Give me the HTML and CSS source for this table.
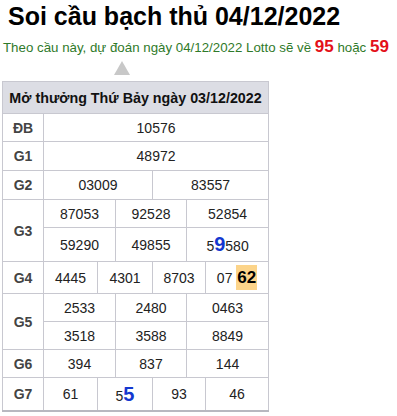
FILE: index.html
```html
<!DOCTYPE html>
<html>
<head>
<meta charset="utf-8">
<link rel="stylesheet" href="styles.css">
</head>
<body>
<h1 class="title">Soi cầu bạch thủ 04/12/2022</h1>
<p class="predict">Theo cầu này, dự đoán ngày 04/12/2022 Lotto sẽ về <b class="hot">95</b> hoặc <b class="hot">59</b></p>
<div class="arrow-wrap"><span class="arrow"></span></div>
<table class="kq">
  <colgroup>
    <col class="c0"><col class="c1"><col class="c2"><col class="c3"><col class="c4"><col class="c5"><col class="c6">
  </colgroup>
  <thead>
    <tr><th colspan="7" class="head">Mở thưởng Thứ Bảy ngày 03/12/2022</th></tr>
  </thead>
  <tbody>
    <tr class="r"><td class="lb">ĐB</td><td colspan="6">10576</td></tr>
    <tr class="r r1"><td class="lb">G1</td><td colspan="6">48972</td></tr>
    <tr class="r r1"><td class="lb">G2</td><td colspan="3">03009</td><td colspan="3">83557</td></tr>
    <tr class="r"><td class="lb" rowspan="2">G3</td><td colspan="2">87053</td><td colspan="2">92528</td><td colspan="2">52854</td></tr>
    <tr class="r3b"><td colspan="2">59290</td><td colspan="2">49855</td><td colspan="2">5<b class="blue">9</b>580</td></tr>
    <tr class="r4"><td class="lb">G4</td><td>4445</td><td colspan="2">4301</td><td colspan="2">8703</td><td>07 <b class="mark">62</b></td></tr>
    <tr class="r"><td class="lb" rowspan="2">G5</td><td colspan="2">2533</td><td colspan="2">2480</td><td colspan="2">0463</td></tr>
    <tr class="r"><td colspan="2">3518</td><td colspan="2">3588</td><td colspan="2">8849</td></tr>
    <tr class="r"><td class="lb">G6</td><td colspan="2">394</td><td colspan="2">837</td><td colspan="2">144</td></tr>
    <tr class="r7"><td class="lb">G7</td><td>61</td><td colspan="2">5<b class="blue">5</b></td><td colspan="2">93</td><td>46</td></tr>
  </tbody>
</table>
</body>
</html>
```

FILE: styles.css
```css
html, body {
  margin: 0;
  padding: 0;
  background: #fff;
}
body {
  font-family: "Liberation Sans", Arial, sans-serif;
  color: #222;
}
.title {
  margin: 0;
  padding: 2px 0 0 8px;
  font-size: 25px;
  line-height: 28px;
  font-weight: bold;
  color: #000;
}
.predict {
  margin: 0;
  padding: 8px 0 0 3px;
  font-size: 13.3px;
  line-height: 18px;
  color: #2f7a2a;
}
.hot {
  color: #e3101a;
  font-size: 17px;
}
.arrow-wrap {
  height: 24px;
  padding-left: 114px;
  padding-top: 4px;
  box-sizing: border-box;
}
.arrow {
  display: block;
  width: 0;
  height: 0;
  border-left: 8px solid transparent;
  border-right: 8px solid transparent;
  border-bottom: 14px solid #c8c8c8;
}
.kq {
  margin-left: 2px;
  width: 267px;
  table-layout: fixed;
  border-collapse: collapse;
  border: 1px solid #c4c4cc;
  border-bottom: 2px solid #b8b8c0;
  font-size: 14px;
}
.c0 { width: 41px; }
.c1 { width: 54px; }
.c2 { width: 18px; }
.c3 { width: 37px; }
.c4 { width: 34px; }
.c5 { width: 19px; }
.c6 { width: 63px; }
.kq th, .kq td {
  border: 1px solid #c8c8d0;
  padding: 0;
  text-align: center;
  white-space: nowrap;
}
.head {
  background: #dcdde4;
  height: 31px;
  font-weight: bold;
  color: #111;
  font-size: 14.3px;
}
.r td { height: 27px; }
.r1 td { height: 28px; }
.r3b td { height: 33px; }
.r4 td { height: 31px; }
.r7 td { height: 32px; }
.lb {
  font-weight: bold;
  color: #444;
}
.blue {
  color: #1438d0;
  font-size: 20px;
}
.mark {
  background: #fcd48a;
  color: #000;
  font-size: 17px;
  padding: 3px 1px;
}
```
